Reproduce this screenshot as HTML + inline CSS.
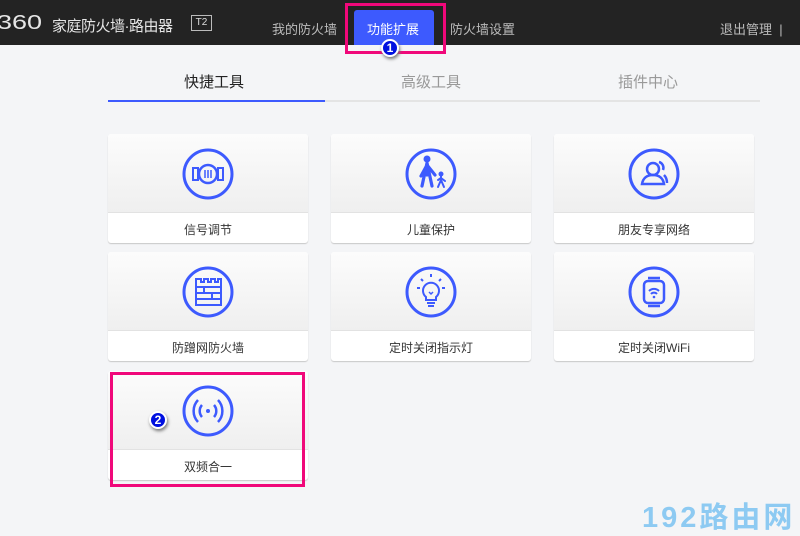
<!DOCTYPE html>
<html><head><meta charset="utf-8"><style>
*{margin:0;padding:0;box-sizing:border-box}
body{width:800px;height:534px;overflow:hidden;background:#f4f5f7;font-family:"Liberation Sans","Noto Sans CJK SC",sans-serif;position:relative}
.hdr{position:absolute;left:0;top:0;width:800px;height:45px;background:#232323}
.t{position:absolute;white-space:nowrap}
.card{position:absolute;width:200px;height:109px;background:#fff;border-radius:3px;box-shadow:0 1px 1px #c8c8c8;overflow:hidden}
.card .top{height:79px;background:linear-gradient(#fcfcfc,#efefef);border-bottom:1px solid #e2e2e2;position:relative}
.card .top svg{position:absolute;left:74px;top:14px}
.card .lb{text-align:center;font-size:12px;color:#333;line-height:34px}
.badge{position:absolute;width:18px;height:18px;border-radius:50%;background:#0010e0;border:2px solid #fff;box-shadow:1px 2px 3px #777;color:#fff;font-size:12px;font-weight:bold;text-align:center;line-height:14px}
</style></head><body>
<div class="hdr"></div>
<div class="t" style="left:-3px;top:12px;font-size:20px;color:#e6e6e6;transform:scaleX(1.35);transform-origin:left">360</div>
<div class="t" style="left:52px;top:15px;font-size:15px;color:#e6e6e6;letter-spacing:-0.5px">家庭防火墙·路由器</div>
<div class="t" style="left:191px;top:15px;width:21px;height:16px;border:1px solid #bbb;color:#ddd;font-size:10px;text-align:center;line-height:14px">T2</div>
<div class="t" style="left:272px;top:19px;font-size:13px;color:#bbb">我的防火墙</div>
<div class="t" style="left:354px;top:10px;width:80px;height:35px;background:#3d5afe;border-radius:3px 3px 0 0"></div>
<div class="t" style="left:367px;top:19px;font-size:13px;color:#fff">功能扩展</div>
<div class="t" style="left:450px;top:19px;font-size:13px;color:#bbb">防火墙设置</div>
<div class="t" style="left:720px;top:19px;font-size:13px;color:#bbb">退出管理 &nbsp;|</div>
<div class="t" style="left:345px;top:3px;width:101px;height:51px;border:3px solid #f0087a"></div>
<div class="badge" style="left:381px;top:39px">1</div>

<div class="t" style="left:184px;top:71px;font-size:15px;color:#222">快捷工具</div>
<div class="t" style="left:401px;top:71px;font-size:15px;color:#999">高级工具</div>
<div class="t" style="left:618px;top:71px;font-size:15px;color:#999">插件中心</div>
<div class="t" style="left:108px;top:100px;width:652px;height:2px;background:#e4e4e4"></div>
<div class="t" style="left:108px;top:100px;width:217px;height:2px;background:#3d5afe"></div>

<div class="card" style="left:108px;top:134px"><div class="top"><svg width="52" height="52" viewBox="0 0 52 52" fill="none" stroke="#3d5afe" stroke-width="3"><circle cx="26" cy="26" r="24"/><rect x="11" y="20" width="5" height="12" stroke-width="2"/><rect x="36" y="20" width="5" height="12" stroke-width="2"/><circle cx="26" cy="26" r="9" stroke-width="2.5"/><path d="M23 22v8M26 22v8M29 22v8" stroke-width="1.5"/></svg></div><div class="lb">信号调节</div></div>
<div class="card" style="left:331px;top:134px"><div class="top"><svg width="52" height="52" viewBox="0 0 52 52" fill="none" stroke="#3d5afe" stroke-width="3"><circle cx="26" cy="26" r="24"/><circle cx="22" cy="11" r="3.5" fill="#3d5afe" stroke="none"/><path d="M22 15v12M17 38l5-23 5 23M22 17l-6 11M22 17l8 10" stroke-width="3.2" stroke-linecap="round"/><circle cx="36" cy="26" r="2.5" fill="#3d5afe" stroke="none"/><path d="M36 28v6M33 39l3-7 3 7M36 30l4 3M36 30l-3 2" stroke-width="2" stroke-linecap="round"/></svg></div><div class="lb">儿童保护</div></div>
<div class="card" style="left:554px;top:134px"><div class="top"><svg width="52" height="52" viewBox="0 0 52 52" fill="none" stroke="#3d5afe" stroke-width="3"><circle cx="26" cy="26" r="24"/><circle cx="25" cy="21" r="6" stroke-width="2.5"/><path d="M14 36c1-6 5-9 11-9s10 3 11 9z" stroke-width="2.5"/><path d="M31 14a6 6 0 0 1 4 8M36 27c2 2 3 5 3 8" stroke-width="2.5"/></svg></div><div class="lb">朋友专享网络</div></div>

<div class="card" style="left:108px;top:252px"><div class="top"><svg width="52" height="52" viewBox="0 0 52 52" fill="none" stroke="#3d5afe" stroke-width="3"><circle cx="26" cy="26" r="24"/><path d="M14 13h5v3h3v-3h4v3h3v-3h4v3h3v-3h3v26H14zM14 21h24M14 27h24M14 33h24M22 21v6M30 27v6" stroke-width="2"/></svg></div><div class="lb">防蹭网防火墙</div></div>
<div class="card" style="left:331px;top:252px"><div class="top"><svg width="52" height="52" viewBox="0 0 52 52" fill="none" stroke="#3d5afe" stroke-width="3"><circle cx="26" cy="26" r="24"/><path d="M21 31a8 8 0 1 1 10 0v3h-10z" stroke-width="2"/><path d="M22 37h8M23 40h6M26 8v3M16 13l2 2M36 13l-2 2M12 22h3M37 22h3" stroke-width="2"/><path d="M24 26l2 2 2-2" stroke-width="1.5"/></svg></div><div class="lb">定时关闭指示灯</div></div>
<div class="card" style="left:554px;top:252px"><div class="top"><svg width="52" height="52" viewBox="0 0 52 52" fill="none" stroke="#3d5afe" stroke-width="3"><circle cx="26" cy="26" r="24"/><rect x="16" y="15" width="20" height="22" rx="4" stroke-width="2.5"/><path d="M20 12h12M20 40h12" stroke-width="2.5"/><path d="M21 25a7 7 0 0 1 10 0M23 28a4 4 0 0 1 6 0" stroke-width="2"/><circle cx="26" cy="31" r="1.3" fill="#3d5afe" stroke="none"/></svg></div><div class="lb">定时关闭WiFi</div></div>

<div class="card" style="left:108px;top:371px"><div class="top"><svg width="52" height="52" viewBox="0 0 52 52" fill="none" stroke="#3d5afe" stroke-width="3"><circle cx="26" cy="26" r="24"/><circle cx="26" cy="26" r="2" fill="#3d5afe" stroke="none"/><path d="M20 20a9 9 0 0 0 0 12M32 20a9 9 0 0 1 0 12M16 15a16 16 0 0 0 0 22M36 15a16 16 0 0 1 0 22" stroke-width="2.5"/></svg></div><div class="lb">双频合一</div></div>
<div class="t" style="left:110px;top:372px;width:195px;height:115px;border:3px solid #f0087a"></div>
<div class="badge" style="left:149px;top:411px">2</div>

<div class="t" style="left:642px;top:494px;font-size:29px;font-weight:bold;color:#8dcaf2;letter-spacing:3px">192路由网</div>
</body></html>
